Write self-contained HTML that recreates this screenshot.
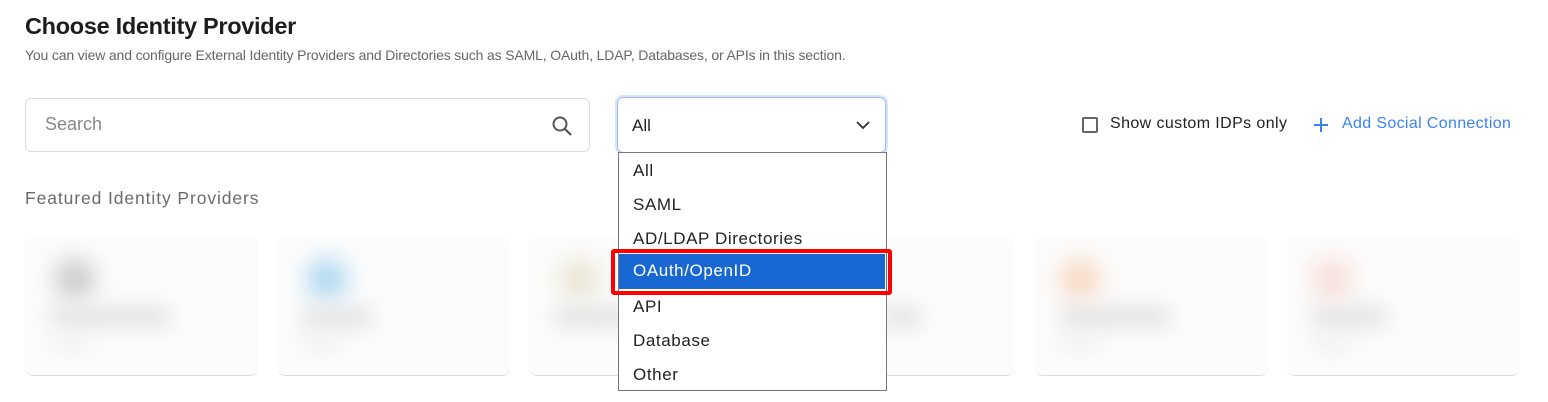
<!DOCTYPE html>
<html><head><meta charset="utf-8"><style>
*{box-sizing:border-box;margin:0;padding:0}
body{width:1548px;height:402px;background:#fff;font-family:"Liberation Sans",sans-serif;position:relative;overflow:hidden;color:#222}
.abs{position:absolute}
h1{position:absolute;left:25px;top:13px;font-size:23.5px;font-weight:bold;color:#1d1d1f;letter-spacing:-0.3px}
.sub{left:25px;top:47px;font-size:14px;color:#666;letter-spacing:-0.15px}
.search{left:25px;top:98px;width:565px;height:54px;border:1px solid #dcdcdc;border-radius:6px}
.search span{position:absolute;left:19px;top:15px;font-size:18px;color:#888}
.sel{left:617px;top:97px;width:269px;height:56px;border:1px solid #9ebef0;border-radius:6px;box-shadow:0 0 0 2px #d7e5fb}
.sel span{position:absolute;left:14px;top:18px;font-size:17px;color:#222}
.feat{left:25px;top:188px;font-size:17.5px;color:#6b6b6b;letter-spacing:0.9px}
.card{top:237px;width:233px;height:139px;border-radius:8px;border-bottom:1px solid #ddd;background:#fcfcfc;overflow:hidden}
.blob{position:absolute;filter:blur(12px);border-radius:50%}
.line{position:absolute;filter:blur(10px);background:#e2e2e2;border-radius:6px}
.list{left:618px;top:152px;width:269px;height:239px;border:1px solid #777;background:#fff}
.it{position:absolute;left:14px;font-size:17px;color:#222;letter-spacing:0.6px}
.hl{left:619px;top:254px;width:266px;height:35px;background:#1967d2}
.red{left:611px;top:249px;width:281px;height:46px;border:4px solid #ff0000;border-radius:3px}
.cb{left:1082px;top:117px;width:16px;height:16px;border:2px solid #666;border-radius:2px}
.txt{font-size:16px;top:115px}
</style></head><body>
<h1>Choose Identity Provider</h1>
<div class="abs sub">You can view and configure External Identity Providers and Directories such as SAML, OAuth, LDAP, Databases, or APIs in this section.</div>
<div class="abs search"><span>Search</span>
<svg class="abs" style="left:525px;top:16px" width="22" height="22" viewBox="0 0 22 22"><circle cx="9" cy="9" r="6.5" fill="none" stroke="#555" stroke-width="2"/><path d="M14 14l6 6" stroke="#555" stroke-width="2.2"/></svg></div>
<div class="abs sel"><span>All</span>
<svg class="abs" style="left:238px;top:22px" width="14" height="10" viewBox="0 0 14 10"><path d="M1 2l6 6 6-6" fill="none" stroke="#333" stroke-width="1.8"/></svg></div>
<div class="abs feat">Featured Identity Providers</div>

<div class="abs card" style="left:25px"><div class="blob" style="left:30px;top:22px;width:40px;height:40px;background:#c8c8c8"></div><div class="line" style="left:25px;top:70px;width:120px;height:20px"></div><div class="line" style="left:25px;top:100px;width:40px;height:12px;background:#eee"></div></div>
<div class="abs card" style="left:277px"><div class="blob" style="left:30px;top:22px;width:40px;height:40px;background:#a9d6f0"></div><div class="line" style="left:25px;top:70px;width:70px;height:20px"></div><div class="line" style="left:25px;top:100px;width:40px;height:12px;background:#eee"></div></div>
<div class="abs card" style="left:529px"><div class="blob" style="left:30px;top:22px;width:40px;height:40px;background:#e8e4d0"></div><div class="line" style="left:25px;top:70px;width:80px;height:20px"></div></div>
<div class="abs card" style="left:781px"><div class="line" style="left:100px;top:70px;width:40px;height:20px"></div></div>
<div class="abs card" style="left:1035px"><div class="blob" style="left:25px;top:22px;width:40px;height:40px;background:#f6d7c0"></div><div class="line" style="left:25px;top:70px;width:110px;height:20px"></div><div class="line" style="left:25px;top:100px;width:40px;height:12px;background:#eee"></div></div>
<div class="abs card" style="left:1287px"><div class="blob" style="left:25px;top:22px;width:40px;height:40px;background:#f8dcd8"></div><div class="line" style="left:25px;top:70px;width:75px;height:20px"></div><div class="line" style="left:25px;top:100px;width:40px;height:12px;background:#eee"></div></div>

<div class="abs list">
<div class="it" style="top:8px">All</div>
<div class="it" style="top:42px">SAML</div>
<div class="it" style="top:76px">AD/LDAP Directories</div>
<div class="it" style="top:144px">API</div>
<div class="it" style="top:178px">Database</div>
<div class="it" style="top:212px">Other</div>
</div>
<div class="abs hl"><div class="it" style="top:7px;color:#fff">OAuth/OpenID</div></div>
<div class="abs red"></div>

<div class="abs cb"></div>
<div class="abs txt" style="left:1110px;color:#222;letter-spacing:0.4px">Show custom IDPs only</div>
<svg class="abs" style="left:1313px;top:117px" width="16" height="16" viewBox="0 0 16 16"><path d="M8 1v14M1 8h14" stroke="#3b82f0" stroke-width="2"/></svg>
<div class="abs txt" style="left:1342px;color:#3b82f0;letter-spacing:0.35px">Add Social Connection</div>
</body></html>
